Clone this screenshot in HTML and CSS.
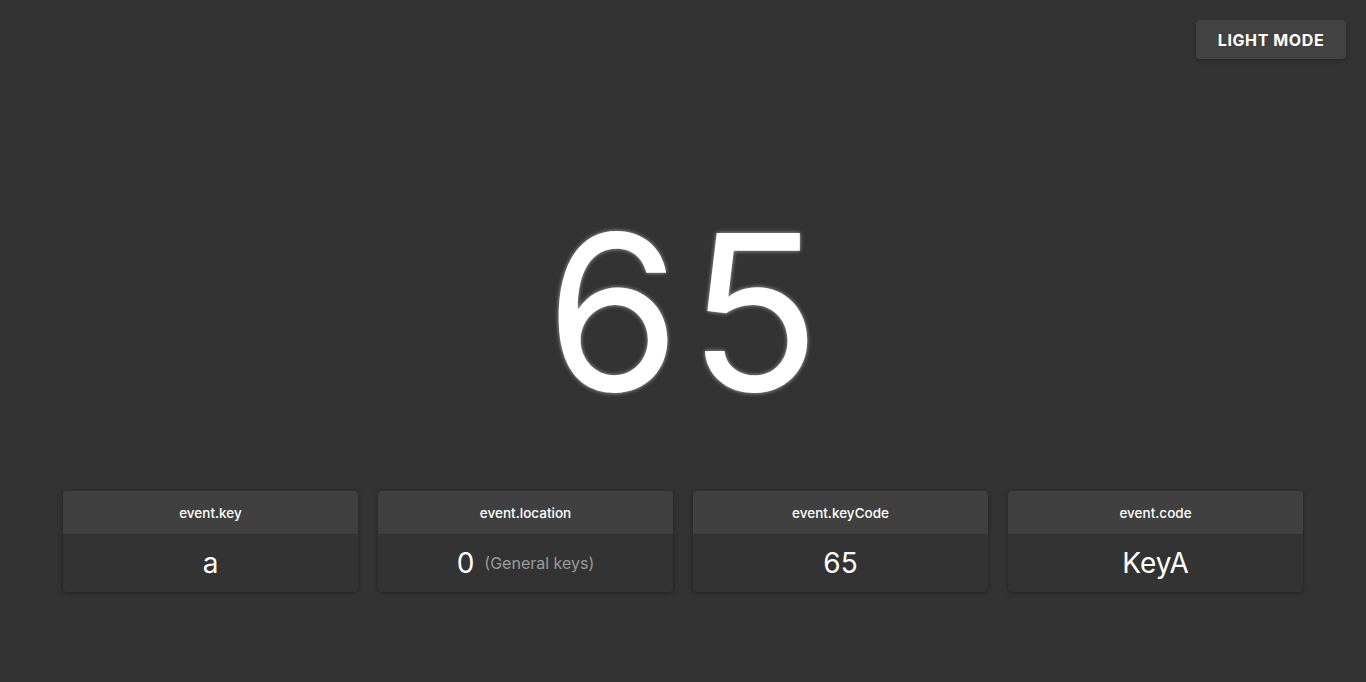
FILE: index.html
```html
<!DOCTYPE html>
<html lang="en">
<head>
<meta charset="utf-8">
<title>Key codes</title>
<link rel="stylesheet" href="styles.css">
</head>
<body>
<div class="page">
  <header class="topbar">
    <button class="mode-btn">LIGHT MODE</button>
  </header>
  <main class="main">
    <div class="keycode">65</div>
    <section class="cards">
      <div class="card">
        <div class="card-head">event.key</div>
        <div class="card-body">a</div>
      </div>
      <div class="card">
        <div class="card-head">event.location</div>
        <div class="card-body">0 <span class="note">(General keys)</span></div>
      </div>
      <div class="card">
        <div class="card-head">event.keyCode</div>
        <div class="card-body">65</div>
      </div>
      <div class="card">
        <div class="card-head">event.code</div>
        <div class="card-body">KeyA</div>
      </div>
    </section>
  </main>
</div>
</body>
</html>
```

FILE: styles.css
```css
html, body {
  margin: 0;
  padding: 0;
  background: #333333;
  color: #ffffff;
  font-family: "Inter", "Noto Sans", sans-serif;
}
.page {
  height: 682px;
  display: flex;
  flex-direction: column;
}
.topbar {
  display: flex;
  justify-content: flex-end;
  padding: 20px 20px 0 0;
}
.mode-btn {
  width: 150px;
  height: 39px;
  background: #424242;
  color: #ffffff;
  border: none;
  border-radius: 4px;
  font-family: "Inter", sans-serif;
  font-weight: 700;
  font-size: 16px;
  letter-spacing: 0.6px;
  box-shadow: 0 2px 4px rgba(0,0,0,0.25);
  cursor: pointer;
}
.main {
  display: flex;
  flex-direction: column;
  align-items: center;
}
.keycode {
  margin-top: 133px;
  padding-left: 8px;
  font-size: 217px;
  line-height: 240px;
  font-weight: 400;
  letter-spacing: 8px;
  text-shadow: 0 0 4px rgba(255,255,255,0.6);
}
.cards {
  margin-top: 59px;
  display: flex;
  gap: 20px;
}
.card {
  width: 295px;
  border-radius: 4px;
  overflow: hidden;
  background: #333333;
  box-shadow: 0 1px 4px rgba(0,0,0,0.35);
}
.card-head {
  height: 43px;
  background: #404040;
  display: flex;
  align-items: center;
  justify-content: center;
  font-size: 13.5px;
  font-weight: 500;
}
.card-body {
  height: 58px;
  display: flex;
  align-items: center;
  justify-content: center;
  font-size: 28px;
  font-weight: 400;
}
.note {
  margin-left: 10px;
  font-size: 16px;
  color: #9a9a9a;
}
```
